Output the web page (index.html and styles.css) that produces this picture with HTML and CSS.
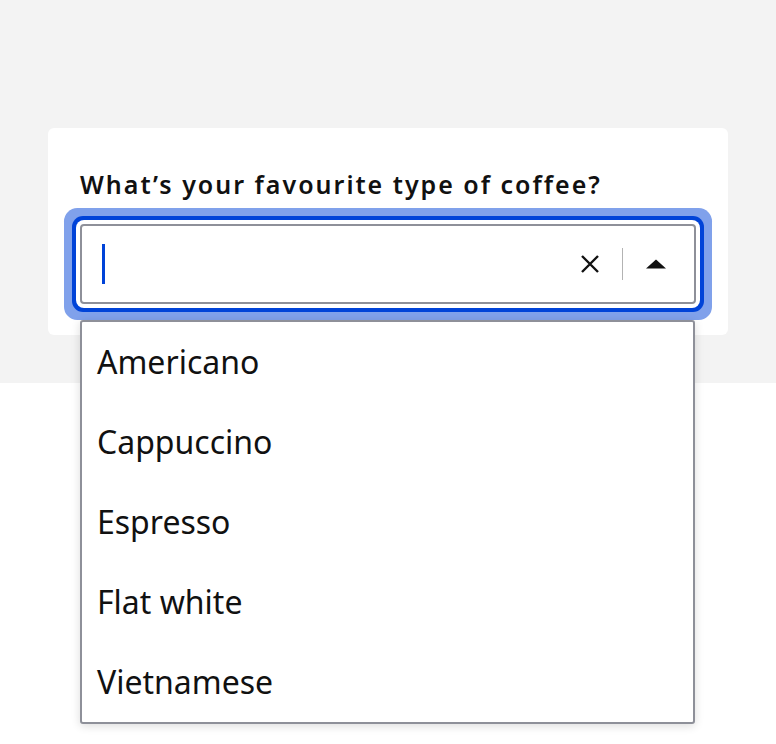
FILE: index.html
```html
<!DOCTYPE html>
<html lang="en">
<head>
<meta charset="utf-8">
<title>Coffee combobox</title>
<link rel="stylesheet" href="styles.css">
</head>
<body>
<div class="stage">
  <div class="card">
    <label class="label" for="coffee">What’s your favourite type of coffee?</label>
    <div class="combo">
      <div class="field" id="coffee" role="combobox" aria-expanded="true">
        <span class="caret"></span>
        <span class="spacer"></span>
        <span class="clear" aria-label="Clear">
          <svg width="20" height="20" viewBox="0 0 20 20"><path d="M2 2 L18 18 M18 2 L2 18" stroke="#111" stroke-width="2.4" fill="none"/></svg>
        </span>
        <span class="divider"></span>
        <span class="toggle" aria-label="Close">
          <svg width="20" height="10" viewBox="0 0 20 10"><polygon points="0,9.5 10,0.5 20,9.5" fill="#111"/></svg>
        </span>
      </div>
      <ul class="listbox" role="listbox">
        <li class="option">Americano</li>
        <li class="option">Cappuccino</li>
        <li class="option">Espresso</li>
        <li class="option">Flat white</li>
        <li class="option">Vietnamese</li>
      </ul>
    </div>
  </div>
</div>
</body>
</html>
```
FILE: styles.css
```css
html, body {
  margin: 0;
  padding: 0;
  background: #ffffff;
  font-family: "Noto Sans", "Open Sans", sans-serif;
  color: #111111;
}
body {
  min-height: 744px;
}
.stage {
  background: #f3f3f3;
  padding: 128px 48px 48px 48px;
}
.card {
  background: #ffffff;
  border-radius: 6px;
  padding: 32px 32px 31px 32px;
}
.label {
  display: block;
  font-size: 25px;
  font-weight: 600;
  letter-spacing: 2px;
  line-height: 48px;
  margin-bottom: 16px;
}
.combo {
  position: relative;
}
.field {
  box-sizing: border-box;
  height: 80px;
  display: flex;
  align-items: center;
  border: 2px solid #8e9099;
  border-radius: 4px;
  background: #fff;
  box-shadow: 0 0 0 4px #ffffff, 0 0 0 8px #0043d8, 0 0 0 16px #80a1eb;
}
.caret {
  display: block;
  width: 3px;
  height: 40px;
  margin-left: 20px;
  background: #0043d8;
}
.spacer {
  flex: 1;
}
.clear, .toggle {
  display: flex;
}
.divider {
  display: block;
  width: 1px;
  height: 32px;
  background: #b3b3b3;
  margin: 0 23px 0 22px;
}
.toggle {
  margin-right: 28px;
}
.listbox {
  position: absolute;
  left: 0;
  top: 96px;
  width: 615px;
  box-sizing: border-box;
  margin: 0;
  padding: 0;
  list-style: none;
  background: #fff;
  border: 2px solid #8e9099;
  border-radius: 3px;
  box-shadow: 0 2px 10px rgba(0, 0, 0, 0.14);
}
.option {
  height: 80px;
  box-sizing: border-box;
  padding: 16px 15px;
  font-size: 32px;
  line-height: 48px;
}
```
